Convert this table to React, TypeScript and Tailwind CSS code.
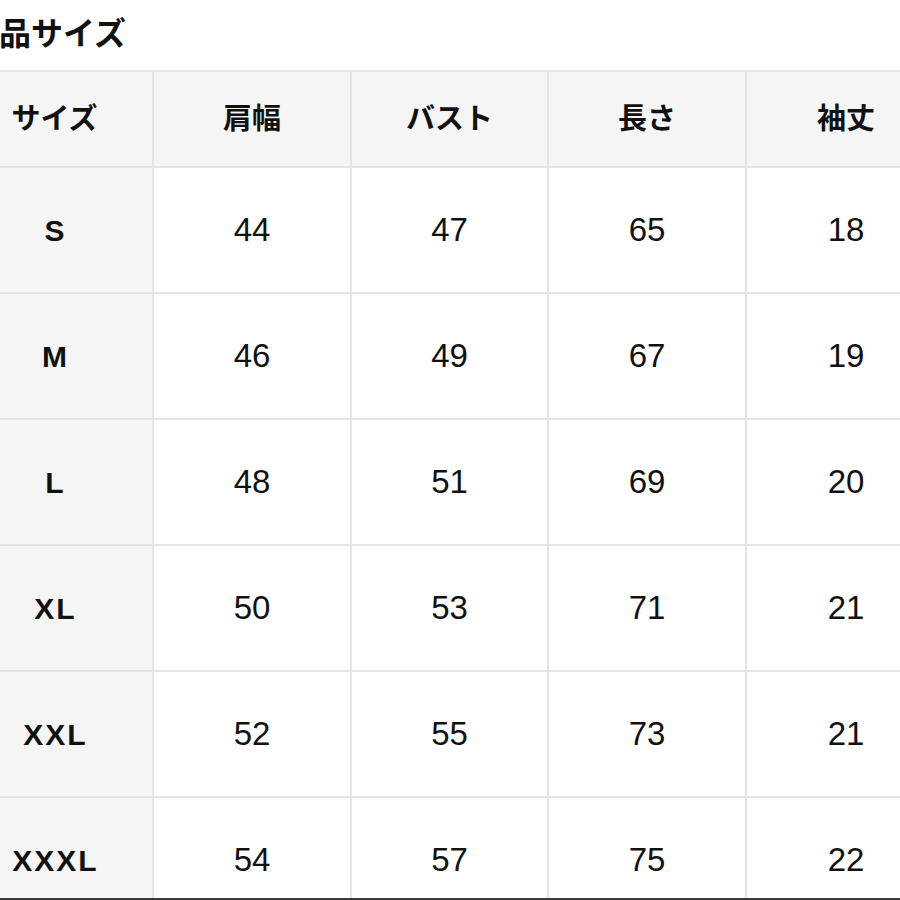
import React from "react";

const headers = ["サイズ", "肩幅", "バスト", "長さ", "袖丈"];
const rows: [string, number, number, number, number][] = [
  ["S", 44, 47, 65, 18],
  ["M", 46, 49, 67, 19],
  ["L", 48, 51, 69, 20],
  ["XL", 50, 53, 71, 21],
  ["XXL", 52, 55, 73, 21],
  ["XXXL", 54, 57, 75, 22],
];

export default function App() {
  return (
    <div
      className="w-[900px] h-[900px] overflow-hidden bg-white text-[#111] border-b-2 border-[#3c3c3c]"
      style={{ fontFamily: '"Liberation Sans", "Noto Sans CJK JP", sans-serif' }}
    >
      <div className="ml-[-45px] w-[990px]">
        <div className="h-[70px] flex items-center pl-[12px] pb-[2px]">
          <h1 className="text-[32px] font-bold leading-none">商品サイズ</h1>
        </div>
        <table className="w-[990px] table-fixed border-collapse">
          <colgroup>
            <col className="w-[197px]" />
            <col className="w-[198px]" />
            <col className="w-[197px]" />
            <col className="w-[198px]" />
            <col className="w-[200px]" />
          </colgroup>
          <thead>
            <tr className="h-[96px] bg-[#f5f5f5]">
              {headers.map((h) => (
                <th
                  key={h}
                  className="border-2 border-[#e4e4e4] text-[29px] font-bold text-center align-middle pt-[2px]"
                >
                  {h}
                </th>
              ))}
            </tr>
          </thead>
          <tbody>
            {rows.map((r) => (
              <tr key={r[0]} className="h-[126px]">
                <td className="border-2 border-[#e4e4e4] bg-[#f5f5f5] text-[30px] font-bold text-center align-middle tracking-[2px] pl-[2px]">
                  {r[0]}
                </td>
                {r.slice(1).map((v, i) => (
                  <td
                    key={i}
                    className="border-2 border-[#e4e4e4] bg-white text-[33px] text-center align-middle"
                  >
                    {v}
                  </td>
                ))}
              </tr>
            ))}
          </tbody>
        </table>
      </div>
    </div>
  );
}
